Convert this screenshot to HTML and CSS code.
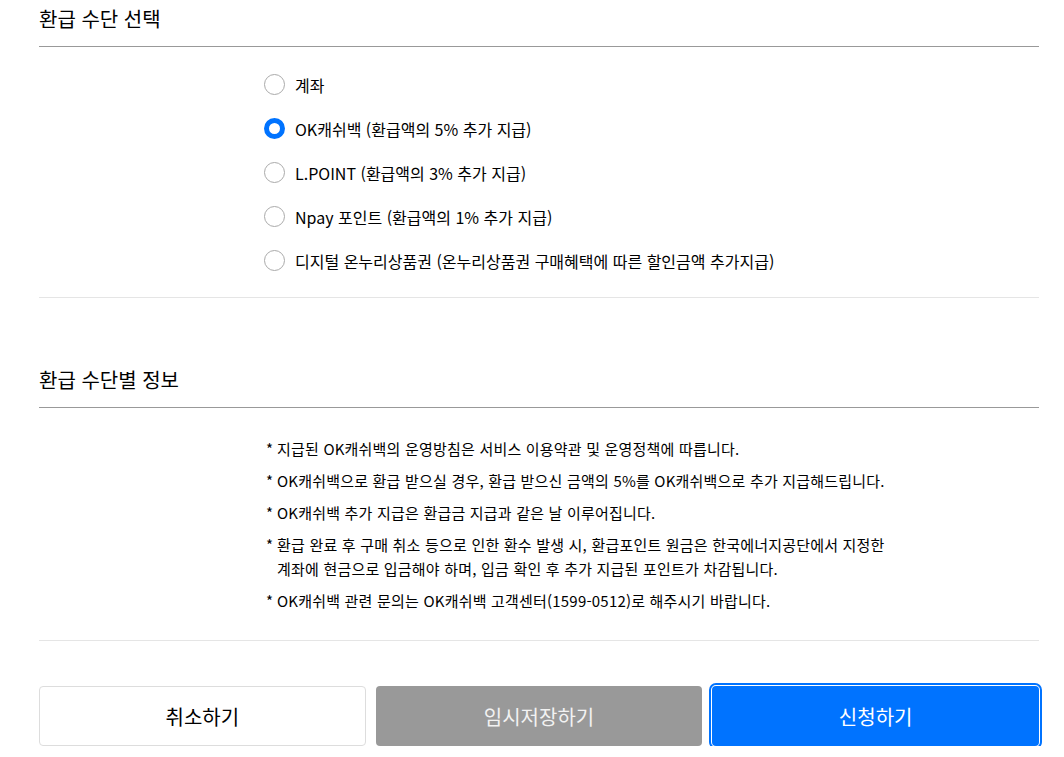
FILE: index.html
```
<!DOCTYPE html>
<html lang="ko">
<head>
    <meta charset="UTF-8">
    <meta name="viewport" content="width=device-width, initial-scale=1.0">
    <title>환급 수단 선택</title>
    <link rel="stylesheet" href="styles.css">
</head>
<body>
    <div class="container">
        <h2 class="section-title">환급 수단 선택</h2>
        <div class="radio-list">
            <label class="radio-item"><input type="radio" name="refundType"> <span>계좌</span></label>
            <label class="radio-item"><input type="radio" name="refundType" checked> <span>OK캐쉬백 (환급액의 5% 추가 지급)</span></label>
            <label class="radio-item"><input type="radio" name="refundType"> <span>L.POINT (환급액의 3% 추가 지급)</span></label>
            <label class="radio-item"><input type="radio" name="refundType"> <span>Npay 포인트 (환급액의 1% 추가 지급)</span></label>
            <label class="radio-item"><input type="radio" name="refundType"> <span>디지털 온누리상품권 (온누리상품권 구매혜택에 따른 할인금액 추가지급)</span></label>
        </div>

        <h2 class="section-title second">환급 수단별 정보</h2>
        <ul class="notes">
            <li>지급된 OK캐쉬백의 운영방침은 서비스 이용약관 및 운영정책에 따릅니다.</li>
            <li>OK캐쉬백으로 환급 받으실 경우, 환급 받으신 금액의 5%를 OK캐쉬백으로 추가 지급해드립니다.</li>
            <li>OK캐쉬백 추가 지급은 환급금 지급과 같은 날 이루어집니다.</li>
            <li>환급 완료 후 구매 취소 등으로 인한 환수 발생 시, 환급포인트 원금은 한국에너지공단에서 지정한<br>계좌에 현금으로 입금해야 하며, 입금 확인 후 추가 지급된 포인트가 차감됩니다.</li>
            <li>OK캐쉬백 관련 문의는 OK캐쉬백 고객센터(1599-0512)로 해주시기 바랍니다.</li>
        </ul>

        <div class="button-row">
            <button class="button cancel" type="button">취소하기</button>
            <button class="button save" type="button">임시저장하기</button>
            <button class="button submit focused" type="submit">신청하기</button>
        </div>
    </div>
</body>
</html>
```

FILE: styles.css
```
* { padding: 0; margin: 0; box-sizing: border-box; }
body {
    font-family: "Noto Sans CJK KR", "Noto Sans", sans-serif;
    color: #000;
    background-color: #fff;
}
.container { width: 1000px; margin: 0 0 0 39px; }
.section-title {
    font-size: 20px;
    font-weight: 400;
    line-height: 38px;
    padding-bottom: 8px;
    border-bottom: 1px solid #999;
}
.section-title.second { margin-top: 63px; }
.radio-list {
    padding: 16px 0 14px 225px;
    border-bottom: 1px solid #e5e5e5;
}
.radio-item {
    display: flex;
    align-items: center;
    height: 44px;
    font-size: 16px;
    color: #000;
    cursor: pointer;
}
.radio-item input {
    appearance: none;
    width: 21px;
    height: 21px;
    margin: -1px 10px 0 0;
    border: 1px solid #aaa;
    border-radius: 50%;
    background-color: #fff;
}
.radio-item input:checked { border: 5px solid #0073ff; }
.notes {
    list-style: none;
    padding: 29px 0 27px 238px;
    border-bottom: 1px solid #e5e5e5;
    display: flex;
    flex-direction: column;
    gap: 8px;
    font-size: 15px;
    letter-spacing: 0.2px;
    line-height: 24px;
    color: #000;
}
.notes li::before {
    content: "*";
    display: inline-block;
    width: 11px;
    margin-left: -11px;
}
.button-row {
    margin-top: 45px;
    display: grid;
    grid-template-columns: repeat(3, 1fr);
    gap: 10px;
}
.button {
    height: 60px;
    font-family: inherit;
    font-size: 20px;
    font-weight: 400;
    border-radius: 4px;
    border: 1px solid transparent;
    cursor: pointer;
}
.button.cancel { background-color: #fff; border-color: #ddd; color: #000; }
.button.save { background-color: #999; color: #f2f2f2; }
.button.submit { background-color: #0073ff; color: #fff; }
.button.focused { outline: 2px solid #0073ff; outline-offset: 1px; }
```
